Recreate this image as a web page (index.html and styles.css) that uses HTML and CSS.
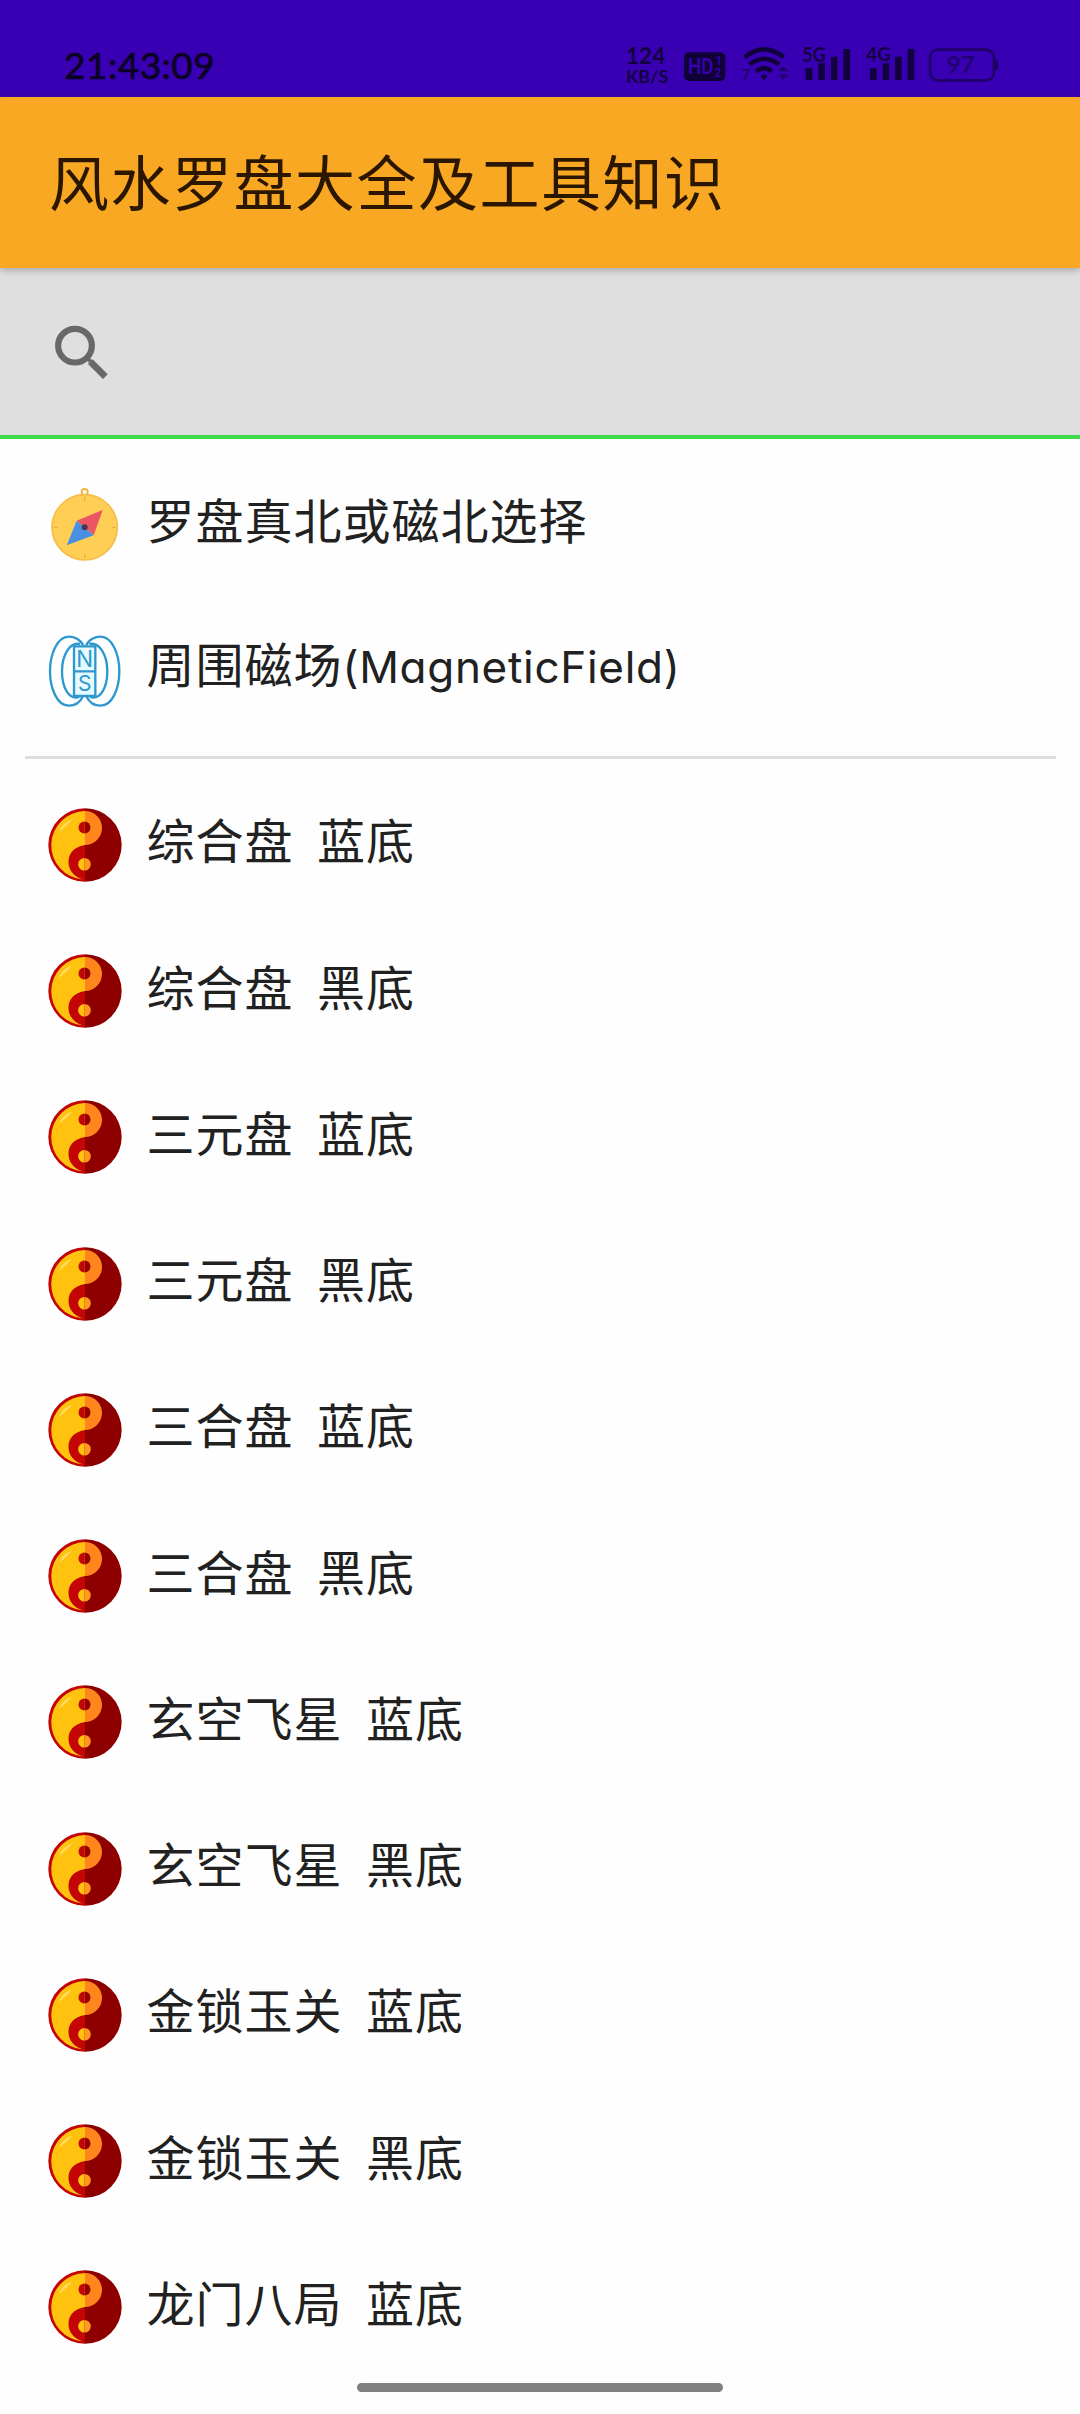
FILE: index.html
```html
<!DOCTYPE html>
<html lang="zh-CN">
  <head>
    <meta charset="UTF-8" />
    <meta name="viewport" content="width=device-width, initial-scale=1.0" />
    <title>风水罗盘大全及工具知识</title>
    <link rel="stylesheet" href="styles.css">
  </head>
  <body>
    <!-- shared icon -->
    <svg class="defs" width="0" height="0">
      <symbol id="taiji" viewBox="0 0 74 74">
        <path d="M37 0.3A36.7 36.7 0 0 0 37 73.7Z" fill="#c30505" />
        <path d="M37 0.3A36.7 36.7 0 0 1 37 73.7Z" fill="#8e0000" />
        <path d="M37 3A17 17 0 0 1 37 37Z" fill="#ff861c" />
        <path d="M37 3V37C25 39 20.500 46 20.500 54C20.500 62 26 69 35 71.500A34.300 34.300 0 0 1 37 3Z" fill="#ffc20e" />
        <path d="M11 24C13 18 18 13 24 12C20 16 16 20 11 24Z" fill="#ffdc62" />
        <path d="M36.500 13.500a6 6 0 0 0 0 12z" fill="#c30505" />
        <path d="M36.500 13.500a6 6 0 0 1 0 12z" fill="#970000" />
        <path d="M36.500 50a6.300 6.300 0 0 0 0 12.600z" fill="#ffc20e" />
        <path d="M36.500 50a6.300 6.300 0 0 1 0 12.600z" fill="#ff9a1e" />
      </symbol>
    </svg>

    <div id="phone">
      <div class="status">
        <span class="clock">21:43:09</span>
        <svg class="status-icons" viewBox="0 0 1260 201">
          <g class="status-text">
            <text x="78" y="103" font-size="66" textLength="118" lengthAdjust="spacingAndGlyphs">124</text>
            <text x="78" y="159" font-size="49" textLength="127" lengthAdjust="spacingAndGlyphs">KB/S</text>
            <text x="607" y="96" font-size="60" textLength="70" lengthAdjust="spacingAndGlyphs">5G</text>
            <text x="799" y="94" font-size="56" textLength="73" lengthAdjust="spacingAndGlyphs">4G</text>
          </g>
          <rect x="252" y="67" width="124" height="86" rx="15" fill="#100038" />
          <g class="hd">
            <text x="264" y="133" font-size="65" textLength="76" lengthAdjust="spacingAndGlyphs">HD</text>
            <text x="346" y="106" font-size="37">1</text>
            <text x="343" y="141" font-size="37">2</text>
          </g>
          <g fill="none" stroke="#10003c" stroke-width="14">
            <path d="M434 82Q492 34 551 82" />
            <path d="M449 103Q492 70 537 103" />
            <path d="M469 124Q492 105 515 124" />
          </g>
          <path d="M482 138Q492 129 502 138L492 151Z" fill="#10003c" />
          <text class="dim" x="424" y="150" font-size="46">7</text>
          <path d="M535 124L550 108L565 124ZM535 134L550 150L565 134Z" fill="#1f0068" />
          <path d="M617 115h20v35h-20zM655 100h20v50h-20zM693 80h19v70h-19zM730 57h20v93h-20z" fill="#12003f" />
          <path d="M810 115h20v35h-20zM848 100h20v50h-20zM885 80h20v70h-20zM923 57h20v93h-20z" fill="#12003f" />
          <rect x="990" y="59" width="192" height="92" rx="24" fill="none" stroke="#1f006a" stroke-width="8" />
          <path d="M1184 90q10 0 10 8v14q0 8 -10 8z" fill="#180054" />
          <text class="dim" x="1040" y="129" font-size="69" textLength="84" lengthAdjust="spacingAndGlyphs">97</text>
        </svg>
      </div>

      <div class="header">风水罗盘大全及工具知识</div>

      <div class="search">
        <svg class="search-icon" viewBox="0 0 162 162">
          <circle cx="63" cy="62" r="50.500" fill="none" stroke="#686868" stroke-width="18.500" />
          <path d="M95 95L110 110" stroke="#686868" stroke-width="12" />
          <path d="M109 110L154 155" stroke="#686868" stroke-width="20" />
        </svg>
      </div>

      <ul class="list">
        <li>
          <svg class="icon" viewBox="0 0 222 222">
            <circle cx="110" cy="12" r="9" fill="none" stroke="#eeb540" stroke-width="6" />
            <circle cx="110" cy="118" r="98" fill="#ffce55" stroke="#f6bd48" stroke-width="5" />
            <path d="M110 25v15M110 196v15M16 118h14M190 118h14" stroke="#e9b246" stroke-width="4" />
            <path d="M164 66L86 98L137 142Z" fill="#ec5564" />
            <path d="M56 172L86 98L137 142Z" fill="#4a90e2" />
            <circle cx="110" cy="118" r="9" fill="#43384e" />
          </svg>
          <span>罗盘真北或磁北选择</span>
        </li>
        <li>
          <svg class="icon magnet" viewBox="0 0 222 222">
            <path d="M106 35C98 16 78 8 62 8C28 8 6 60 6 112C6 165 28 215 62 215C82 215 96 205 104 188" />
            <path d="M96 30C66 24 42 62 42 112C42 160 62 198 94 189" />
            <path d="M114 35C122 16 142 8 158 8C192 8 214 60 214 112C214 165 192 215 158 215C138 215 124 205 116 188" />
            <path d="M124 30C154 24 178 62 178 112C178 160 158 198 126 189" />
            <path class="bar" d="M78 37H142V186H78ZM78 112H142" />
            <text x="110" y="98" font-size="67">N</text>
            <text x="110" y="172" font-size="63">S</text>
          </svg>
          <span>周围磁场<b class="latin">(MagneticField)</b></span>
        </li>
      </ul>
      <div class="line"></div>
      <ul class="list">
        <li><svg class="icon"><use href="#taiji" /></svg><span>综合盘  蓝底</span></li>
        <li><svg class="icon"><use href="#taiji" /></svg><span>综合盘  黑底</span></li>
        <li><svg class="icon"><use href="#taiji" /></svg><span>三元盘  蓝底</span></li>
        <li><svg class="icon"><use href="#taiji" /></svg><span>三元盘  黑底</span></li>
        <li><svg class="icon"><use href="#taiji" /></svg><span>三合盘  蓝底</span></li>
        <li><svg class="icon"><use href="#taiji" /></svg><span>三合盘  黑底</span></li>
        <li><svg class="icon"><use href="#taiji" /></svg><span>玄空飞星  蓝底</span></li>
        <li><svg class="icon"><use href="#taiji" /></svg><span>玄空飞星  黑底</span></li>
        <li><svg class="icon"><use href="#taiji" /></svg><span>金锁玉关  蓝底</span></li>
        <li><svg class="icon"><use href="#taiji" /></svg><span>金锁玉关  黑底</span></li>
        <li><svg class="icon"><use href="#taiji" /></svg><span>龙门八局  蓝底</span></li>
      </ul>
      <div class="home-bar"></div>
    </div>
  </body>
</html>
```

FILE: styles.css
```css
* {
  margin: 0;
  padding: 0;
  box-sizing: border-box;
}
body {
  background-color: #fefefe;
  font-family: "Noto Sans CJK SC", sans-serif;
  color: #212121;
}
.defs {
  display: block;
}
#phone {
  width: 1080px;
  height: 2414px;
  position: relative;
  overflow: hidden;
}
/* status bar */
.status {
  height: 97px;
  padding: 30px 60px 0 64px;
  background-color: #3900b3;
  display: flex;
  justify-content: space-between;
}
.clock {
  height: 67px;
  line-height: 69px;
  font-family: Lato, sans-serif;
  font-size: 37px;
  letter-spacing: 0.5px;
  color: #0b0024;
  -webkit-text-stroke: 0.7px #0b0024;
}
.status-icons {
  width: 420px;
  height: 67px;
}
.status-text {
  font-family: Lato, sans-serif;
  font-weight: bold;
  fill: #12003f;
}
.hd {
  font-family: Roboto, sans-serif;
  font-weight: 500;
  fill: #3900b3;
}
.dim {
  font-family: Lato, sans-serif;
  font-weight: bold;
  fill: #22006f;
}
/* title */
.header {
  height: 171px;
  padding-left: 49px;
  line-height: 166px;
  background-color: #f9a824;
  box-shadow: 0 2px 7px rgba(0, 0, 0, 0.28);
  position: relative;
  font-size: 60px;
  letter-spacing: 1.5px;
  color: #2b1700;
}
.search {
  height: 171px;
  padding: 57px 0 0 54px;
  background-color: #dfdfdf;
  border-bottom: 4px solid #3fdb4c;
}
.search-icon {
  display: block;
  width: 54px;
  height: 54px;
}
/* menu */
.list {
  list-style: none;
  padding-top: 12.500px;
}
.list li {
  height: 146.250px;
  padding-left: 48.400px;
  display: flex;
  align-items: center;
}
.icon {
  width: 74px;
  height: 74px;
  margin-right: 24px;
  flex-shrink: 0;
}
.list span {
  font-size: 48px;
  line-height: 60px;
  letter-spacing: 1px;
  padding-bottom: 13px;
  white-space: pre;
}
/* cv11 is the single-storey a */
.list .latin {
  font-family: Inter, sans-serif;
  font-feature-settings: "cv11";
  font-size: 44px;
  font-weight: normal;
  letter-spacing: 0.7px;
}
.magnet path {
  fill: none;
  stroke: #2c98cd;
  stroke-width: 7;
}
.magnet .bar {
  fill: #e6fbff;
}
.magnet text {
  font-family: Inter, sans-serif;
  fill: #2c98cd;
  text-anchor: middle;
}
.line {
  height: 3px;
  margin: 12.300px 24px 0 25px;
  background-color: #dedede;
}
.home-bar {
  position: absolute;
  left: 357px;
  bottom: 22px;
  width: 366px;
  height: 9px;
  border-radius: 5px;
  background-color: #808080;
}
```
